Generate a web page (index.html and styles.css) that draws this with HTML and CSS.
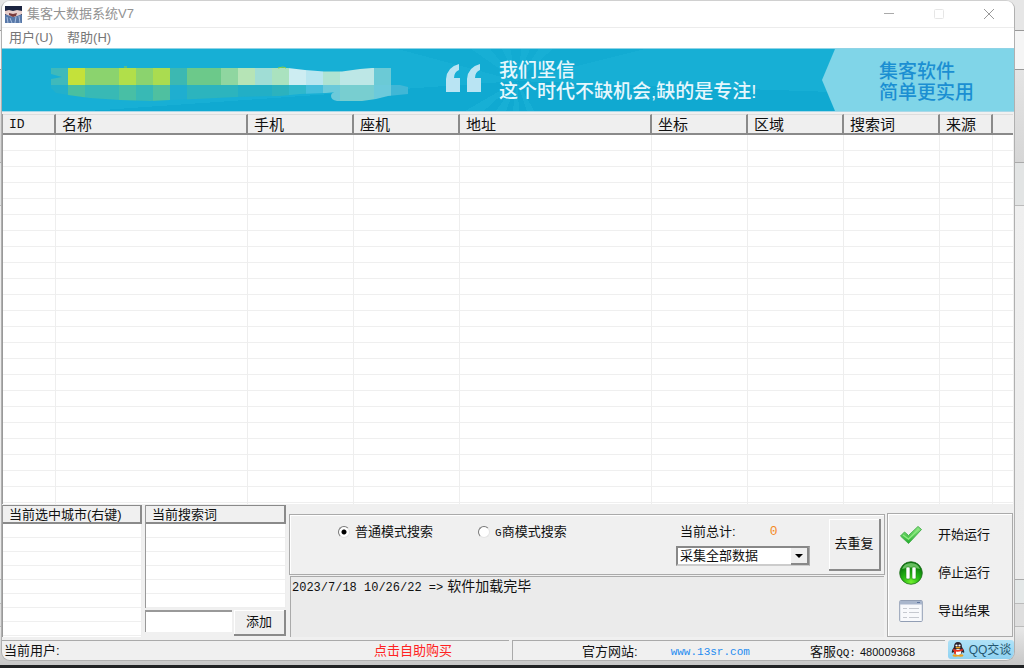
FILE: index.html
```html
<!DOCTYPE html>
<html lang="zh-CN">
<head>
<meta charset="utf-8">
<title>集客大数据系统V7</title>
<link rel="stylesheet" href="styles.css">
</head>
<body>
<div class="window">
  <header class="titlebar">
    <svg class="app-icon" width="17" height="17" viewBox="0 0 17 17" aria-hidden="true">
      <rect width="17" height="17" fill="#1b2440"/>
      <path d="M0 9l4-2 5 2 4-2 4 2v8H0z" fill="#5878a8"/>
      <path d="M0 5l4-1 4 1 4-1 5 1v3l-5 2-3 1-4-1-5-2z" fill="#e8cfcb"/>
      <path d="M4 7l4 1 4-1-1 3-3 1-4-2z" fill="#7c3c3c"/>
      <path d="M5 12l2 5M11 11l-1 6M2 11l1 6M14 10l1 7" stroke="#a9bfdf" stroke-width="1"/>
    </svg>
    <h1 class="title">集客大数据系统V7</h1>
    <div class="caption-buttons">
      <button type="button" class="caption" aria-label="最小化"><svg width="12" height="12" viewBox="0 0 12 12"><path d="M1 5.500H11" stroke="#aaa" fill="none"/></svg></button>
      <button type="button" class="caption" aria-label="最大化" disabled><svg width="12" height="12" viewBox="0 0 12 12"><rect x="1.500" y="1.500" width="9" height="9" rx="1" stroke="#e6e6e6" fill="none"/></svg></button>
      <button type="button" class="caption" aria-label="关闭"><svg width="12" height="12" viewBox="0 0 12 12"><path d="M1 1L11 11M11 1L1 11" stroke="#999" fill="none"/></svg></button>
    </div>
  </header>
  <nav class="menubar">
    <button type="button" class="menu">用户(U)</button>
    <button type="button" class="menu">帮助(H)</button>
  </nav>
  <section class="banner">
    <svg class="mosaic" width="360" height="40" viewBox="50 65 360 40" aria-hidden="true">
      <defs><clipPath id="blot"><path d="M51 68H288L305 70L324 71.500H342L360 69L372 68H391V85H400L408 87V94L398 95L388 96L376 99L362 101H337Q331 100 331 96Q331 92 337 92L326 93L300 94L280 96L236 97L196 99L170 100L150 101L120 100L90 98L68 95L56 93L51 88V79L62 77L51 74Z"/></clipPath></defs>
      <g clip-path="url(#blot)" shape-rendering="crispEdges">
        <rect x="51" y="68" width="17" height="17" fill="#3fb9bb"/>
        <rect x="68" y="68" width="17" height="17" fill="#c4e13a"/>
        <rect x="85" y="68" width="34" height="17" fill="#8bd36e"/>
        <rect x="119" y="68" width="17" height="17" fill="#b1df4a"/>
        <rect x="136" y="68" width="17" height="17" fill="#8bd36e"/>
        <rect x="153" y="68" width="17" height="17" fill="#aadc50"/>
        <rect x="170" y="68" width="17" height="17" fill="#3cb8b2"/>
        <rect x="187" y="68" width="34" height="17" fill="#6cc98a"/>
        <rect x="221" y="68" width="17" height="17" fill="#8fd6a0"/>
        <rect x="238" y="68" width="17" height="17" fill="#b6e4b6"/>
        <rect x="255" y="68" width="17" height="17" fill="#a0ddd5"/>
        <rect x="272" y="68" width="17" height="17" fill="#aae2bf"/>
        <rect x="289" y="68" width="17" height="17" fill="#cdedf2"/>
        <rect x="306" y="68" width="17" height="17" fill="#b8e6f0"/>
        <rect x="323" y="68" width="17" height="17" fill="#aee3d2"/>
        <rect x="340" y="68" width="34" height="17" fill="#bde7e6"/>
        <rect x="374" y="68" width="17" height="17" fill="#6bcad6"/>
        <rect x="51" y="85" width="17" height="17" fill="#22b0cc"/>
        <rect x="68" y="85" width="17" height="17" fill="#4abfa0"/>
        <rect x="85" y="85" width="34" height="17" fill="#38b9b5"/>
        <rect x="119" y="85" width="17" height="17" fill="#48bfa5"/>
        <rect x="136" y="85" width="17" height="17" fill="#38b9b5"/>
        <rect x="153" y="85" width="17" height="17" fill="#4fc0a0"/>
        <rect x="170" y="85" width="17" height="17" fill="#1faed0"/>
        <rect x="187" y="85" width="51" height="17" fill="#2cb4be"/>
        <rect x="238" y="85" width="34" height="17" fill="#22afc6"/>
        <rect x="272" y="85" width="17" height="17" fill="#2cb2be"/>
        <rect x="289" y="85" width="17" height="17" fill="#30b8cc"/>
        <rect x="306" y="85" width="17" height="17" fill="#45bedc"/>
        <rect x="323" y="85" width="17" height="17" fill="#6ccada"/>
        <rect x="340" y="85" width="34" height="17" fill="#78ced0"/>
        <rect x="374" y="85" width="17" height="17" fill="#6ccadb"/>
        <rect x="391" y="85" width="17" height="17" fill="#40b7d6"/>
      </g>
      <path d="M124 67h3M278 68q6-2 8 0" stroke="#8fd040" fill="none"/>
    </svg>
    <svg class="quote" width="36" height="29" viewBox="0 0 36 29" aria-hidden="true">
      <path d="M0 28V15Q1 3 13 0V6Q8 8 8 14H14V28Z" fill="#b9e4f3"/>
      <path d="M21 28V15Q22 3 34 0V6Q29 8 29 14H35V28Z" fill="#b9e4f3"/>
    </svg>
    <p class="slogan">我们坚信<br>这个时代不缺机会,缺的是专注!</p>
    <p class="brand">集客软件<br>简单更实用</p>
  </section>

  <main class="results">
    <table class="grid">
      <colgroup><col class="c-id"><col class="c-name"><col class="c-phone"><col class="c-phone"><col><col class="c-area"><col class="c-area"><col class="c-area"><col class="c-id"><col class="c-end"></colgroup>
      <thead><tr><th class="ascii">ID</th><th>名称</th><th>手机</th><th>座机</th><th>地址</th><th>坐标</th><th>区域</th><th>搜索词</th><th>来源</th><th></th></tr></thead>
      <tbody><tr><td></td><td></td><td></td><td></td><td></td><td></td><td></td><td></td><td></td><td></td></tr></tbody>
    </table>
  </main>

  <section class="controls">
    <div class="list city-list">
      <h2 class="list-head">当前选中城市(右键)</h2>
      <div class="list-body"></div>
    </div>
    <div class="word-column">
      <div class="list word-list">
        <h2 class="list-head">当前搜索词</h2>
        <div class="list-body"></div>
      </div>
      <form class="add-row">
        <input class="word-input" type="text" aria-label="搜索词">
        <button type="button" class="raised add">添加</button>
      </form>
    </div>
    <div class="center">
      <form class="options">
        <div class="modes">
          <label class="radio"><input type="radio" name="mode" checked>普通模式搜索</label>
          <label class="radio"><input type="radio" name="mode"><span><span class="half">G</span>商模式搜索</span></label>
        </div>
        <div class="totals">
          <p class="total"><label for="total">当前总计:</label><output id="total">0</output></p>
          <div class="combo">
            <select aria-label="采集范围"><option>采集全部数据</option></select>
            <span class="combo-arrow"></span>
          </div>
        </div>
        <button type="button" class="raised dedupe">去重复</button>
      </form>
      <div class="log"><span class="stamp">2023/7/18 10/26/22 =&gt;</span>软件加载完毕</div>
    </div>
    <div class="actions">
      <button type="button" class="action">
        <svg width="24" height="24" viewBox="0 0 24 24" aria-hidden="true">
          <defs><linearGradient id="leaf" x1="0" y1="0" x2="0" y2="1"><stop offset="0" stop-color="#8fe884"/><stop offset="1" stop-color="#22ac2c"/></linearGradient></defs>
          <path d="M1.500 13L5.500 9L9.500 12.500L19 3.500L22.500 6.500L9.500 20.500Z" fill="url(#leaf)" stroke="#46b04c" stroke-linejoin="round"/>
          <path d="M4 12L9.500 16L20 6" stroke="#8aea7e" stroke-width="1.500" fill="none"/>
        </svg>开始运行</button>
      <button type="button" class="action">
        <svg width="24" height="24" viewBox="0 0 24 24" aria-hidden="true">
          <defs><radialGradient id="ball" cx=".5" cy=".9" r=".8"><stop offset="0" stop-color="#72f02e"/><stop offset=".5" stop-color="#22b412"/><stop offset="1" stop-color="#08700c"/></radialGradient></defs>
          <circle cx="12" cy="12" r="11.300" fill="url(#ball)" stroke="#23701f" stroke-width=".8"/>
          <path d="M3 8Q5 2 12 2Q19 2 21 8Q12 5 3 8Z" fill="#8fdd83" opacity=".7"/>
          <rect x="7" y="6" width="4" height="12" rx="1" fill="#fff" stroke="#17800f" stroke-width=".6"/>
          <rect x="13" y="6" width="4" height="12" rx="1" fill="#fff" stroke="#17800f" stroke-width=".6"/>
        </svg>停止运行</button>
      <button type="button" class="action">
        <svg width="24" height="24" viewBox="0 0 24 24" aria-hidden="true">
          <rect x=".7" y="1.500" width="22.600" height="21" rx="1" fill="#f8f9fc" stroke="#929eb4"/>
          <rect x="1" y="2" width="22" height="3.500" fill="#a9b6cc"/>
          <path d="M18 3.500h3" stroke="#6177a0"/>
          <path d="M4 9.500h4M10 9.500h10M4 13.500h4M10 13.500h10M4 18.500h4M10 18.500h10" stroke="#c6c9d0"/>
        </svg>导出结果</button>
    </div>
  </section>

  <footer class="status">
    <div class="cell user-cell"><span class="user">当前用户:</span><a class="buy" href="#">点击自助购买</a></div>
    <div class="cell site-cell"><span>官方网站:</span><a class="site" href="#">www.13sr.com</a><span class="service">客服<span class="half">QQ:</span></span><span class="number">480009368</span></div>
    <button type="button" class="qq">
      <svg width="14" height="15" viewBox="0 0 14 15" aria-hidden="true">
        <ellipse cx="4.500" cy="13.500" rx="3" ry="1.300" fill="#f2a21c"/><ellipse cx="9.500" cy="13.500" rx="3" ry="1.300" fill="#f2a21c"/>
        <path d="M3 5Q3 0 7 0T11 5Q14 9 13 11L11.500 10Q10 13 7 13T2.500 10L1 11Q0 9 3 5Z" fill="#2c2430"/>
        <ellipse cx="7" cy="10" rx="3.300" ry="3" fill="#fff"/>
        <circle cx="5.500" cy="3.500" r="1.100" fill="#fff"/><circle cx="8.500" cy="3.500" r="1.100" fill="#fff"/>
        <ellipse cx="7" cy="5.600" rx="2.600" ry=".9" fill="#f2a21c"/>
        <path d="M2.500 6.500Q7 9.500 11.500 6.500L12 8.500Q7 10.500 5 9.500V12L3 11.500V9L2 8.500Z" fill="#e53322"/>
      </svg>QQ交谈</button>
  </footer>
</div>
<div class="taskbar"></div>
</body>
</html>
```
FILE: styles.css
```css
* { box-sizing: border-box; }

body {
  margin: 0;
  min-height: 100vh;
  display: flex;
  flex-direction: column;
  font: 13px/16px "Liberation Sans", "Noto Sans CJK SC", sans-serif;
  color: #111;
  background: linear-gradient(#e6e6e6 30px, #999 30px, #999 31px, #f5f5f5 31px, #f5f5f5 69px, #999 69px, #999 70px, #e4e4e4 70px, #d6d6d6 162px, #aaa 162px, #aaa 163px, #e2e4e4 163px, #e2e4e4 205px, #bbb 205px, #bbb 206px, #efefef 206px, #ebebeb 579px, #aaa 579px, #aaa 580px, #e4e8e8 580px, #e4e8e8 603px, #bbb 603px, #bbb 604px, #dedede 604px, #dedede 626px, #bbb 626px, #bbb 627px, #e8e8e8 627px, #c4c4c4);
}

h1, h2, p { margin: 0; font-weight: 400; }
h1, h2, button, input, select { font: inherit; color: inherit; }
button { border: 0; padding: 0; background: none; }
a { text-decoration: none; }

.window {
  flex: 1;
  display: flex;
  flex-direction: column;
  margin: 0 9px 4px 1px;
  border: 1px solid #b0b0b0;
  border-top-color: #d0d0d0;
  border-radius: 9px;
  background: #f0f0f0;
  overflow: hidden;
}

.taskbar { height: 3px; background: #202224; }

.titlebar {
  display: flex;
  align-items: center;
  height: 27px;
  padding-left: 3px;
  gap: 5px;
  background: #fff;
  border-bottom: 1px solid #ececec;
  color: #929292;
}
.title { flex: 1; font-size: 13px; }
.caption-buttons { display: flex; }
.caption { width: 50px; height: 26px; display: grid; place-items: center; }

.menubar {
  display: flex;
  gap: 14px;
  height: 20px;
  padding-left: 7px;
  background: #fff;
  color: #777;
}

.banner {
  display: flex;
  align-items: center;
  height: 64px;
  padding-left: 48px;
  border-bottom: 1px solid #a8d8e8;
  border-top: 1px solid #8fd3e6;
  background: conic-gradient(from 0deg at 515px 32px, #12abd2 0deg 8deg, #17afd5 8deg 22deg, #12abd2 22deg 34deg, #17afd5 34deg 48deg, #12abd2 48deg 76deg, #17afd5 76deg 92deg, #10a9d1 92deg 150deg, #17afd5 150deg 162deg, #10a9d1 162deg 176deg, #17afd5 176deg 188deg, #10a9d1 188deg 200deg, #17afd5 200deg 215deg, #10a9d1 215deg 228deg, #17afd5 228deg 240deg, #10a9d1 240deg 266deg, #17afd5 266deg 285deg, #12abd2 285deg 305deg, #17afd5 305deg 320deg, #12abd2 320deg 335deg, #17afd5 335deg 348deg, #12abd2 348deg);
}
.mosaic { margin-top: 9px; }
.quote { margin: 0 0 3px 36px; }
.slogan, .brand { font-size: 19px; line-height: 21px; font-weight: 500; }
.slogan { flex: 1; margin: 1px 0 0 17px; color: #e6f7fd; white-space: nowrap; }
.brand {
  align-self: stretch;
  width: 192px;
  padding: 12px 0 0 57px;
  background: #80d5e8;
  color: #1b8fd2;
  clip-path: polygon(13px 0, 100% 0, 100% 100%, 13px 100%, 0 50%);
}

.results {
  flex: 1;
  display: flex;
  margin: 2px 1px 0 0;
  border-left: 1px solid #999;
  background: #fff;
}
.grid { flex: 1; width: 100%; table-layout: fixed; border-collapse: separate; border-spacing: 0; }
.c-id { width: 53px; }
.c-name { width: 192px; }
.c-phone { width: 106px; }
.c-area { width: 96px; }
.c-end { width: 20px; }
.grid th {
  height: 21px;
  padding: 2px 0 0 6px;
  text-align: left;
  font-size: 15px;
  line-height: 16px;
  font-weight: 400;
  background: #efefef;
  border-top: 1px solid #ddd;
  border-right: 2px solid #8a8a8a;
  border-bottom: 2px solid #8a8a8a;
  white-space: nowrap;
}
.grid th:last-child { border-right: 0; }
.grid .ascii { font: 13px/16px "Liberation Mono", monospace; }
.grid td {
  padding: 0;
  border-right: 1px solid #eee;
  background: repeating-linear-gradient(#fff 0 15px, #efefef 15px 16px);
}
.grid td:last-child { border-right: 0; }

.controls { display: flex; padding: 1px 0 3px; }
.list { display: flex; flex-direction: column; border-left: 1px solid #999; }
.list-head {
  height: 19px;
  padding-left: 6px;
  line-height: 18px;
  border: solid #8a8a8a;
  border-width: 1px 2px 2px 0;
  white-space: nowrap;
}
.list-body {
  flex: 1;
  border-right: 1px solid #eee;
  background: repeating-linear-gradient(#fff 0 13px, #efefef 13px 14px);
}
.city-list { width: 140px; }
.word-column { display: flex; flex-direction: column; width: 141px; margin-left: 3px; }
.word-list { height: 103px; }
.add-row { display: flex; gap: 2px; margin-top: 2px; }
.word-input {
  flex: 1;
  min-width: 0;
  height: 22px;
  border: solid #999;
  border-width: 2px 0 0 1px;
  background: #fff;
}
.raised {
  border: solid #8a8a8a;
  border-width: 0 2px 2px 0;
  background: #efefef;
  box-shadow: inset 1px 1px #fff;
}
.add { width: 52px; height: 26px; }

.center { flex: 1; display: flex; flex-direction: column; margin: 9px 0 0 3px; }
.options {
  display: flex;
  height: 61px;
  padding: 4px 3px 3px 48px;
  border: 1px solid #aaa;
  box-shadow: inset 1px 1px #fff;
}
.modes { flex: 1; display: flex; gap: 45px; padding-top: 4px; }
.radio { display: flex; height: 18px; align-items: center; gap: 5px; white-space: nowrap; }
.half { font-family: "Liberation Mono", monospace; font-size: 11px; }
.radio input {
  appearance: none;
  width: 12px;
  height: 12px;
  margin: 0;
  border: 1px solid #777;
  border-right-color: #e4e4e4;
  border-bottom-color: #e4e4e4;
  border-radius: 50%;
  background: #fff;
}
.radio input:checked { background: radial-gradient(circle, #000 2px, #fff 3px); }
.totals { width: 153px; padding-top: 5px; }
.total { display: flex; gap: 34px; padding-left: 4px; }
.total output { color: #f58a1f; font-family: "Liberation Mono", monospace; }
.combo { position: relative; width: 134px; height: 20px; margin-top: 6px; }
.combo select {
  appearance: none;
  display: block;
  width: 100%;
  height: 100%;
  padding: 0 2px;
  border: 2px solid #888;
  border-right-color: #aaa;
  border-bottom-color: #ccc;
  border-radius: 0;
  background: #fff;
}
.combo-arrow {
  position: absolute;
  top: 2px;
  right: 1px;
  width: 18px;
  height: 17px;
  border: solid #888;
  border-width: 0 2px 2px 0;
  background: #efefef;
  pointer-events: none;
}
.combo-arrow::after {
  content: "";
  position: absolute;
  top: 6px;
  left: 4px;
  border: solid transparent;
  border-width: 4px 4px 0;
  border-top-color: #000;
}
.dedupe { width: 52px; height: 52px; }
.log {
  flex: 1;
  margin: 1px 1px 0;
  padding: 0 1px;
  font-size: 14px;
  line-height: 18px;
  border: solid #aaa;
  border-width: 1px 0 0 1px;
  background: #ebebeb;
}
.stamp { font: 12px/18px "Liberation Mono", monospace; margin-right: 4px; }

.actions {
  display: flex;
  flex-direction: column;
  gap: 13px;
  width: 126px;
  height: 124px;
  margin: 8px 1px 0 2px;
  padding: 8px 0 0 11px;
  border: 1px solid #aaa;
  box-shadow: inset 1px 1px #fff;
}
.action { display: flex; align-items: center; gap: 15px; height: 25px; }

.status { display: flex; gap: 3px; height: 20px; }
.cell { display: flex; align-items: center; border: solid #aaa; border-width: 1px 0 0 1px; white-space: nowrap; }
.user-cell { width: 507px; border-left: 0; padding-left: 2px; }
.user { flex: 1; }
.buy { color: #f22; margin-right: 57px; }
.site-cell { flex: 1; padding: 3px 30px 0 69px; }
.site { margin-left: 33px; color: #1e8cf0; font: 11px/16px "Liberation Mono", monospace; }
.service { margin-left: auto; }
.number { margin-left: 4px; font-size: 11px; }
.qq {
  display: flex;
  align-items: center;
  justify-content: center;
  gap: 4px;
  width: 66px;
  height: 19px;
  font-size: 12px;
  border-radius: 3px;
  color: #24566e;
  background: linear-gradient(#b0e2f7, #8fd2f2);
}
```
